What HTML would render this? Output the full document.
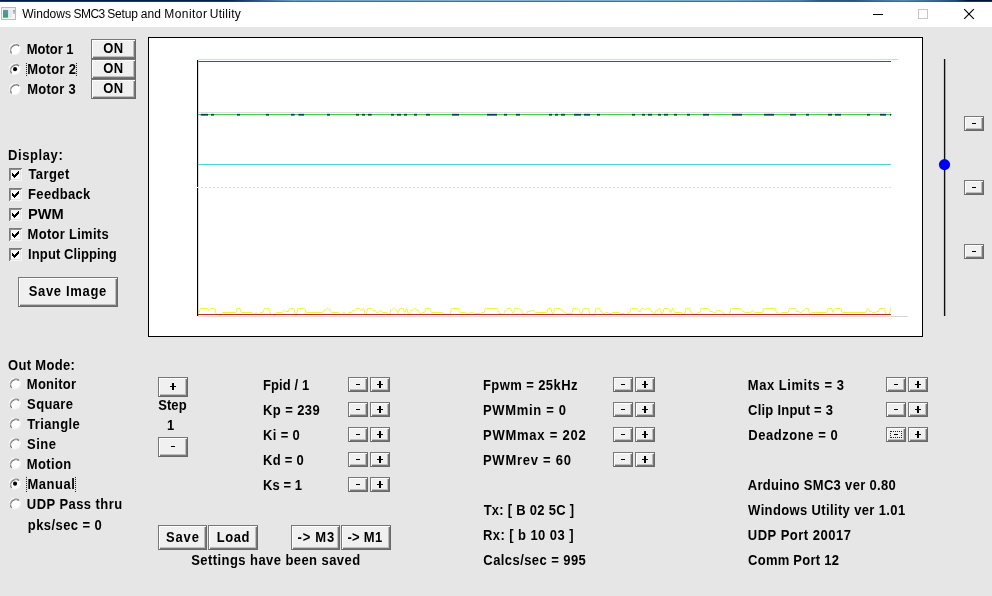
<!DOCTYPE html>
<html><head><meta charset="utf-8"><title>Windows SMC3 Setup and Monitor Utility</title>
<style>
html,body{margin:0;padding:0}
body{width:992px;height:596px;background:#e6e6e6;position:relative;overflow:hidden;font-family:"Liberation Sans",sans-serif;color:#000}
.t{position:absolute;white-space:nowrap;font-weight:bold;font-size:13px;line-height:16px;height:16px;transform:scaleY(1.1);transform-origin:0 12px}
.btn{position:absolute;box-sizing:border-box;border:1px solid;border-color:#787878 #686868 #686868 #787878;background:#f0f0f0;box-shadow:inset 1px 1px 0 #fff,inset -1px -1px 0 #767676,inset -2px -2px 0 #bebebe}
.tw{position:absolute;white-space:nowrap;font-size:12px;line-height:18px;height:18px;color:#000}
.rad{position:absolute;box-sizing:border-box;width:12px;height:12px;border-radius:50%;background:#fff;border:1px solid;border-color:#6a6a6a #f8f8f8 #f8f8f8 #6a6a6a;transform:rotate(0deg)}
.rad.on:after{content:"";position:absolute;left:3px;top:3px;width:4px;height:4px;border-radius:50%;background:#000}
.chk{position:absolute;box-sizing:border-box;width:13px;height:13px;background:#fff;border:1px solid;border-color:#6a6a6a #f4f4f4 #f4f4f4 #6a6a6a;box-shadow:inset 1px 1px 0 #9a9a9a}
.foc{position:absolute;box-sizing:border-box;border:1px dotted #000}
.g{position:absolute;background:#000}
</style></head><body>

<div style="position:absolute;left:0;top:0;width:992px;height:27px;background:#fff"></div>
<div style="position:absolute;left:0;top:0;width:992px;height:1px;background:linear-gradient(90deg,#011b4b 0,#03204f 23%,#3a6090 26.5%,#6d9abd 29.5%,#88b0cc 50%,#7aaac8 73%,#4f7fa8 80.6%,#2f5a80 82.5%,#2a5478 86%,#3f6e98 88%,#5686ae 91%,#3f6a94 94%,#1f4a78 96.3%,#001238 97.6%,#001238 100%)"></div>
<div style="position:absolute;left:0;top:1px;width:992px;height:1px;background:linear-gradient(90deg,#20386a 0,#22396a 23%,#3a5880 26.5%,#48698a 29.5%,#4c6c86 50%,#4a6c88 73%,#456a8c 80.6%,#3a5a7c 83%,#3a5a7c 87%,#466c90 91%,#3c5e86 94%,#2c4a72 96.3%,#203462 97.6%,#203462 100%)"></div>
<svg style="position:absolute;left:1px;top:7px" width="15" height="13" viewBox="0 0 15 13">
<defs><linearGradient id="ig" x1="0" y1="0" x2="0" y2="1"><stop offset="0" stop-color="#6f8fb2"/><stop offset="0.45" stop-color="#4b9a8e"/><stop offset="1" stop-color="#3f9a7c"/></linearGradient>
<linearGradient id="ih" x1="0" y1="0" x2="0" y2="1"><stop offset="0" stop-color="#8fa3bd"/><stop offset="1" stop-color="#c9d0d6"/></linearGradient></defs>
<rect x="0.5" y="0.5" width="14" height="12" fill="#f6f6f6" stroke="#bcbcbc"/>
<rect x="1" y="1" width="13" height="1.6" fill="#eeeeee"/>
<rect x="2" y="2.9" width="5.3" height="7.8" fill="url(#ig)"/>
<rect x="7.3" y="2.9" width="3.6" height="7.8" fill="#ebe8ec"/>
<rect x="11.9" y="2.9" width="2.1" height="4.2" fill="url(#ih)"/>
</svg>
<svg style="position:absolute;left:868px;top:0" width="124" height="27" viewBox="0 0 124 27">
<rect x="5" y="14" width="10" height="1" fill="#000"/>
<rect x="50.5" y="9.5" width="9" height="9" fill="none" stroke="#c6c6c6" stroke-width="1"/>
<path d="M96.2 9.2 L105.8 18.8 M105.8 9.2 L96.2 18.8" stroke="#000" stroke-width="1.15" fill="none"/>
</svg>
<svg style="position:absolute;left:8px;top:43px" width="14" height="14" viewBox="0 0 14 14"><g transform="translate(0.7,0)"><circle cx="6" cy="6" r="5.8" fill="#ffffff"/><path d="M2.18 9.82 A5.4 5.4 0 0 0 9.82 2.18" fill="none" stroke="#f6f6f6" stroke-width="1.1"/><path d="M10.42 2.90 A5.4 5.4 0 0 0 2.90 10.42" fill="none" stroke="#747474" stroke-width="1.25"/><path d="M8.83 2.63 A4.4 4.4 0 0 0 2.63 8.83" fill="none" stroke="#c4c4c4" stroke-width="0.8"/></g></svg>
<svg style="position:absolute;left:8px;top:63px" width="14" height="14" viewBox="0 0 14 14"><g transform="translate(0.7,0)"><circle cx="6" cy="6" r="5.8" fill="#ffffff"/><path d="M2.18 9.82 A5.4 5.4 0 0 0 9.82 2.18" fill="none" stroke="#f6f6f6" stroke-width="1.1"/><path d="M10.42 2.90 A5.4 5.4 0 0 0 2.90 10.42" fill="none" stroke="#747474" stroke-width="1.25"/><path d="M8.83 2.63 A4.4 4.4 0 0 0 2.63 8.83" fill="none" stroke="#c4c4c4" stroke-width="0.8"/><circle cx="6.35" cy="6.15" r="2.05" fill="#000"/></g></svg>
<svg style="position:absolute;left:8px;top:83px" width="14" height="14" viewBox="0 0 14 14"><g transform="translate(0.7,0)"><circle cx="6" cy="6" r="5.8" fill="#ffffff"/><path d="M2.18 9.82 A5.4 5.4 0 0 0 9.82 2.18" fill="none" stroke="#f6f6f6" stroke-width="1.1"/><path d="M10.42 2.90 A5.4 5.4 0 0 0 2.90 10.42" fill="none" stroke="#747474" stroke-width="1.25"/><path d="M8.83 2.63 A4.4 4.4 0 0 0 2.63 8.83" fill="none" stroke="#c4c4c4" stroke-width="0.8"/></g></svg>
<svg style="position:absolute;left:8px;top:377px" width="14" height="14" viewBox="0 0 14 14"><g transform="translate(0.7,0.5)"><circle cx="6" cy="6" r="5.8" fill="#ffffff"/><path d="M2.18 9.82 A5.4 5.4 0 0 0 9.82 2.18" fill="none" stroke="#f6f6f6" stroke-width="1.1"/><path d="M10.42 2.90 A5.4 5.4 0 0 0 2.90 10.42" fill="none" stroke="#747474" stroke-width="1.25"/><path d="M8.83 2.63 A4.4 4.4 0 0 0 2.63 8.83" fill="none" stroke="#c4c4c4" stroke-width="0.8"/></g></svg>
<svg style="position:absolute;left:8px;top:397px" width="14" height="14" viewBox="0 0 14 14"><g transform="translate(0.7,0.5)"><circle cx="6" cy="6" r="5.8" fill="#ffffff"/><path d="M2.18 9.82 A5.4 5.4 0 0 0 9.82 2.18" fill="none" stroke="#f6f6f6" stroke-width="1.1"/><path d="M10.42 2.90 A5.4 5.4 0 0 0 2.90 10.42" fill="none" stroke="#747474" stroke-width="1.25"/><path d="M8.83 2.63 A4.4 4.4 0 0 0 2.63 8.83" fill="none" stroke="#c4c4c4" stroke-width="0.8"/></g></svg>
<svg style="position:absolute;left:8px;top:417px" width="14" height="14" viewBox="0 0 14 14"><g transform="translate(0.7,0.5)"><circle cx="6" cy="6" r="5.8" fill="#ffffff"/><path d="M2.18 9.82 A5.4 5.4 0 0 0 9.82 2.18" fill="none" stroke="#f6f6f6" stroke-width="1.1"/><path d="M10.42 2.90 A5.4 5.4 0 0 0 2.90 10.42" fill="none" stroke="#747474" stroke-width="1.25"/><path d="M8.83 2.63 A4.4 4.4 0 0 0 2.63 8.83" fill="none" stroke="#c4c4c4" stroke-width="0.8"/></g></svg>
<svg style="position:absolute;left:8px;top:437px" width="14" height="14" viewBox="0 0 14 14"><g transform="translate(0.7,0.5)"><circle cx="6" cy="6" r="5.8" fill="#ffffff"/><path d="M2.18 9.82 A5.4 5.4 0 0 0 9.82 2.18" fill="none" stroke="#f6f6f6" stroke-width="1.1"/><path d="M10.42 2.90 A5.4 5.4 0 0 0 2.90 10.42" fill="none" stroke="#747474" stroke-width="1.25"/><path d="M8.83 2.63 A4.4 4.4 0 0 0 2.63 8.83" fill="none" stroke="#c4c4c4" stroke-width="0.8"/></g></svg>
<svg style="position:absolute;left:8px;top:457px" width="14" height="14" viewBox="0 0 14 14"><g transform="translate(0.7,0.5)"><circle cx="6" cy="6" r="5.8" fill="#ffffff"/><path d="M2.18 9.82 A5.4 5.4 0 0 0 9.82 2.18" fill="none" stroke="#f6f6f6" stroke-width="1.1"/><path d="M10.42 2.90 A5.4 5.4 0 0 0 2.90 10.42" fill="none" stroke="#747474" stroke-width="1.25"/><path d="M8.83 2.63 A4.4 4.4 0 0 0 2.63 8.83" fill="none" stroke="#c4c4c4" stroke-width="0.8"/></g></svg>
<svg style="position:absolute;left:8px;top:477px" width="14" height="14" viewBox="0 0 14 14"><g transform="translate(0.7,0.5)"><circle cx="6" cy="6" r="5.8" fill="#ffffff"/><path d="M2.18 9.82 A5.4 5.4 0 0 0 9.82 2.18" fill="none" stroke="#f6f6f6" stroke-width="1.1"/><path d="M10.42 2.90 A5.4 5.4 0 0 0 2.90 10.42" fill="none" stroke="#747474" stroke-width="1.25"/><path d="M8.83 2.63 A4.4 4.4 0 0 0 2.63 8.83" fill="none" stroke="#c4c4c4" stroke-width="0.8"/><circle cx="6.35" cy="6.15" r="2.05" fill="#000"/></g></svg>
<svg style="position:absolute;left:8px;top:497px" width="14" height="14" viewBox="0 0 14 14"><g transform="translate(0.7,0.5)"><circle cx="6" cy="6" r="5.8" fill="#ffffff"/><path d="M2.18 9.82 A5.4 5.4 0 0 0 9.82 2.18" fill="none" stroke="#f6f6f6" stroke-width="1.1"/><path d="M10.42 2.90 A5.4 5.4 0 0 0 2.90 10.42" fill="none" stroke="#747474" stroke-width="1.25"/><path d="M8.83 2.63 A4.4 4.4 0 0 0 2.63 8.83" fill="none" stroke="#c4c4c4" stroke-width="0.8"/></g></svg>
<svg style="position:absolute;left:9px;top:168px" width="13" height="13" viewBox="0 0 13 13" shape-rendering="crispEdges"><rect width="13" height="13" fill="#fbfbfb"/><rect width="13" height="1" fill="#7c7c7c"/><rect width="1" height="13" fill="#7c7c7c"/><rect x="1" y="1" width="11" height="1" fill="#8e8e8e"/><rect x="1" y="1" width="1" height="11" fill="#8e8e8e"/><rect x="1" y="12" width="12" height="1" fill="#f6f6f6"/><rect x="12" y="1" width="1" height="12" fill="#f6f6f6"/><rect x="2" y="11" width="10" height="1" fill="#e4e4e4"/><rect x="11" y="2" width="1" height="10" fill="#e4e4e4"/><rect x="3" y="5" width="1" height="3" fill="#000"/><rect x="4" y="6" width="1" height="3" fill="#000"/><rect x="5" y="7" width="1" height="3" fill="#000"/><rect x="6" y="6" width="1" height="3" fill="#000"/><rect x="7" y="5" width="1" height="3" fill="#000"/><rect x="8" y="4" width="1" height="3" fill="#000"/><rect x="9" y="3" width="1" height="3" fill="#000"/></svg>
<svg style="position:absolute;left:9px;top:188px" width="13" height="13" viewBox="0 0 13 13" shape-rendering="crispEdges"><rect width="13" height="13" fill="#fbfbfb"/><rect width="13" height="1" fill="#7c7c7c"/><rect width="1" height="13" fill="#7c7c7c"/><rect x="1" y="1" width="11" height="1" fill="#8e8e8e"/><rect x="1" y="1" width="1" height="11" fill="#8e8e8e"/><rect x="1" y="12" width="12" height="1" fill="#f6f6f6"/><rect x="12" y="1" width="1" height="12" fill="#f6f6f6"/><rect x="2" y="11" width="10" height="1" fill="#e4e4e4"/><rect x="11" y="2" width="1" height="10" fill="#e4e4e4"/><rect x="3" y="5" width="1" height="3" fill="#000"/><rect x="4" y="6" width="1" height="3" fill="#000"/><rect x="5" y="7" width="1" height="3" fill="#000"/><rect x="6" y="6" width="1" height="3" fill="#000"/><rect x="7" y="5" width="1" height="3" fill="#000"/><rect x="8" y="4" width="1" height="3" fill="#000"/><rect x="9" y="3" width="1" height="3" fill="#000"/></svg>
<svg style="position:absolute;left:9px;top:208px" width="13" height="13" viewBox="0 0 13 13" shape-rendering="crispEdges"><rect width="13" height="13" fill="#fbfbfb"/><rect width="13" height="1" fill="#7c7c7c"/><rect width="1" height="13" fill="#7c7c7c"/><rect x="1" y="1" width="11" height="1" fill="#8e8e8e"/><rect x="1" y="1" width="1" height="11" fill="#8e8e8e"/><rect x="1" y="12" width="12" height="1" fill="#f6f6f6"/><rect x="12" y="1" width="1" height="12" fill="#f6f6f6"/><rect x="2" y="11" width="10" height="1" fill="#e4e4e4"/><rect x="11" y="2" width="1" height="10" fill="#e4e4e4"/><rect x="3" y="5" width="1" height="3" fill="#000"/><rect x="4" y="6" width="1" height="3" fill="#000"/><rect x="5" y="7" width="1" height="3" fill="#000"/><rect x="6" y="6" width="1" height="3" fill="#000"/><rect x="7" y="5" width="1" height="3" fill="#000"/><rect x="8" y="4" width="1" height="3" fill="#000"/><rect x="9" y="3" width="1" height="3" fill="#000"/></svg>
<svg style="position:absolute;left:9px;top:228px" width="13" height="13" viewBox="0 0 13 13" shape-rendering="crispEdges"><rect width="13" height="13" fill="#fbfbfb"/><rect width="13" height="1" fill="#7c7c7c"/><rect width="1" height="13" fill="#7c7c7c"/><rect x="1" y="1" width="11" height="1" fill="#8e8e8e"/><rect x="1" y="1" width="1" height="11" fill="#8e8e8e"/><rect x="1" y="12" width="12" height="1" fill="#f6f6f6"/><rect x="12" y="1" width="1" height="12" fill="#f6f6f6"/><rect x="2" y="11" width="10" height="1" fill="#e4e4e4"/><rect x="11" y="2" width="1" height="10" fill="#e4e4e4"/><rect x="3" y="5" width="1" height="3" fill="#000"/><rect x="4" y="6" width="1" height="3" fill="#000"/><rect x="5" y="7" width="1" height="3" fill="#000"/><rect x="6" y="6" width="1" height="3" fill="#000"/><rect x="7" y="5" width="1" height="3" fill="#000"/><rect x="8" y="4" width="1" height="3" fill="#000"/><rect x="9" y="3" width="1" height="3" fill="#000"/></svg>
<svg style="position:absolute;left:9px;top:248px" width="13" height="13" viewBox="0 0 13 13" shape-rendering="crispEdges"><rect width="13" height="13" fill="#fbfbfb"/><rect width="13" height="1" fill="#7c7c7c"/><rect width="1" height="13" fill="#7c7c7c"/><rect x="1" y="1" width="11" height="1" fill="#8e8e8e"/><rect x="1" y="1" width="1" height="11" fill="#8e8e8e"/><rect x="1" y="12" width="12" height="1" fill="#f6f6f6"/><rect x="12" y="1" width="1" height="12" fill="#f6f6f6"/><rect x="2" y="11" width="10" height="1" fill="#e4e4e4"/><rect x="11" y="2" width="1" height="10" fill="#e4e4e4"/><rect x="3" y="5" width="1" height="3" fill="#000"/><rect x="4" y="6" width="1" height="3" fill="#000"/><rect x="5" y="7" width="1" height="3" fill="#000"/><rect x="6" y="6" width="1" height="3" fill="#000"/><rect x="7" y="5" width="1" height="3" fill="#000"/><rect x="8" y="4" width="1" height="3" fill="#000"/><rect x="9" y="3" width="1" height="3" fill="#000"/></svg>
<div style="position:absolute;left:26px;top:63px;width:1px;height:14px;background:repeating-linear-gradient(180deg,#222 0,#222 1px,transparent 1px,transparent 2px)"></div>
<div style="position:absolute;left:76px;top:63px;width:1px;height:14px;background:repeating-linear-gradient(180deg,#222 0,#222 1px,transparent 1px,transparent 2px)"></div>
<div style="position:absolute;left:26px;top:477px;width:1px;height:15px;background:repeating-linear-gradient(180deg,#222 0,#222 1px,transparent 1px,transparent 2px)"></div>
<div style="position:absolute;left:75px;top:477px;width:1px;height:15px;background:repeating-linear-gradient(180deg,#222 0,#222 1px,transparent 1px,transparent 2px)"></div>
<div class="btn" style="left:91px;top:39px;width:45px;height:20px"></div>
<div class="btn" style="left:91px;top:59px;width:45px;height:20px"></div>
<div class="btn" style="left:91px;top:79px;width:45px;height:20px"></div>
<div class="btn" style="left:18px;top:277px;width:100px;height:30px"></div>
<div class="btn" style="left:158px;top:377px;width:30px;height:20px"></div>
<div class="btn" style="left:158px;top:437px;width:30px;height:20px"></div>
<div class="btn" style="left:158px;top:525px;width:49px;height:25px"></div>
<div class="btn" style="left:208px;top:525px;width:50px;height:25px"></div>
<div class="btn" style="left:291px;top:525px;width:49px;height:25px"></div>
<div class="btn" style="left:341px;top:525px;width:50px;height:25px"></div>
<div class="btn" style="left:348px;top:377px;width:20px;height:15px"></div>
<div class="btn" style="left:370px;top:377px;width:20px;height:15px"></div>
<div class="g" style="left:356px;top:383.8px;width:4px;height:1.5px"></div>
<div class="g" style="left:377px;top:383.8px;width:6px;height:1.5px"></div><div class="g" style="left:379px;top:381px;width:2px;height:7px"></div>
<div class="btn" style="left:348px;top:402px;width:20px;height:15px"></div>
<div class="btn" style="left:370px;top:402px;width:20px;height:15px"></div>
<div class="g" style="left:356px;top:408.8px;width:4px;height:1.5px"></div>
<div class="g" style="left:377px;top:408.8px;width:6px;height:1.5px"></div><div class="g" style="left:379px;top:406px;width:2px;height:7px"></div>
<div class="btn" style="left:348px;top:427px;width:20px;height:15px"></div>
<div class="btn" style="left:370px;top:427px;width:20px;height:15px"></div>
<div class="g" style="left:356px;top:433.8px;width:4px;height:1.5px"></div>
<div class="g" style="left:377px;top:433.8px;width:6px;height:1.5px"></div><div class="g" style="left:379px;top:431px;width:2px;height:7px"></div>
<div class="btn" style="left:348px;top:452px;width:20px;height:15px"></div>
<div class="btn" style="left:370px;top:452px;width:20px;height:15px"></div>
<div class="g" style="left:356px;top:458.8px;width:4px;height:1.5px"></div>
<div class="g" style="left:377px;top:458.8px;width:6px;height:1.5px"></div><div class="g" style="left:379px;top:456px;width:2px;height:7px"></div>
<div class="btn" style="left:348px;top:477px;width:20px;height:15px"></div>
<div class="btn" style="left:370px;top:477px;width:20px;height:15px"></div>
<div class="g" style="left:356px;top:483.8px;width:4px;height:1.5px"></div>
<div class="g" style="left:377px;top:483.8px;width:6px;height:1.5px"></div><div class="g" style="left:379px;top:481px;width:2px;height:7px"></div>
<div class="btn" style="left:613px;top:377px;width:20px;height:15px"></div>
<div class="btn" style="left:635px;top:377px;width:20px;height:15px"></div>
<div class="g" style="left:621px;top:383.8px;width:4px;height:1.5px"></div>
<div class="g" style="left:642px;top:383.8px;width:6px;height:1.5px"></div><div class="g" style="left:644px;top:381px;width:2px;height:7px"></div>
<div class="btn" style="left:613px;top:402px;width:20px;height:15px"></div>
<div class="btn" style="left:635px;top:402px;width:20px;height:15px"></div>
<div class="g" style="left:621px;top:408.8px;width:4px;height:1.5px"></div>
<div class="g" style="left:642px;top:408.8px;width:6px;height:1.5px"></div><div class="g" style="left:644px;top:406px;width:2px;height:7px"></div>
<div class="btn" style="left:613px;top:427px;width:20px;height:15px"></div>
<div class="btn" style="left:635px;top:427px;width:20px;height:15px"></div>
<div class="g" style="left:621px;top:433.8px;width:4px;height:1.5px"></div>
<div class="g" style="left:642px;top:433.8px;width:6px;height:1.5px"></div><div class="g" style="left:644px;top:431px;width:2px;height:7px"></div>
<div class="btn" style="left:613px;top:452px;width:20px;height:15px"></div>
<div class="btn" style="left:635px;top:452px;width:20px;height:15px"></div>
<div class="g" style="left:621px;top:458.8px;width:4px;height:1.5px"></div>
<div class="g" style="left:642px;top:458.8px;width:6px;height:1.5px"></div><div class="g" style="left:644px;top:456px;width:2px;height:7px"></div>
<div class="btn" style="left:886px;top:377px;width:20px;height:15px"></div>
<div class="btn" style="left:908px;top:377px;width:20px;height:15px"></div>
<div class="g" style="left:894px;top:383.8px;width:4px;height:1.5px"></div>
<div class="g" style="left:915px;top:383.8px;width:6px;height:1.5px"></div><div class="g" style="left:917px;top:381px;width:2px;height:7px"></div>
<div class="btn" style="left:886px;top:402px;width:20px;height:15px"></div>
<div class="btn" style="left:908px;top:402px;width:20px;height:15px"></div>
<div class="g" style="left:894px;top:408.8px;width:4px;height:1.5px"></div>
<div class="g" style="left:915px;top:408.8px;width:6px;height:1.5px"></div><div class="g" style="left:917px;top:406px;width:2px;height:7px"></div>
<div class="btn" style="left:886px;top:427px;width:20px;height:15px"></div>
<div class="btn" style="left:908px;top:427px;width:20px;height:15px"></div>
<div class="g" style="left:894px;top:433.8px;width:4px;height:1.5px"></div>
<div class="g" style="left:915px;top:433.8px;width:6px;height:1.5px"></div><div class="g" style="left:917px;top:431px;width:2px;height:7px"></div>
<div class="foc" style="left:890px;top:431px;width:12px;height:7px;border-color:#222"></div>
<div class="btn" style="left:964px;top:116px;width:20px;height:15px"></div>
<div class="g" style="left:972px;top:122.8px;width:4px;height:1.5px"></div>
<div class="btn" style="left:964px;top:180px;width:20px;height:15px"></div>
<div class="g" style="left:972px;top:186.8px;width:4px;height:1.5px"></div>
<div class="btn" style="left:964px;top:244px;width:20px;height:15px"></div>
<div class="g" style="left:972px;top:250.8px;width:4px;height:1.5px"></div>
<div class="g" style="left:170px;top:385.8px;width:6px;height:1.3px"></div><div class="g" style="left:172.1px;top:383px;width:2px;height:7px"></div>
<div class="g" style="left:171.1px;top:445.5px;width:4.2px;height:1.3px"></div>
<div style="position:absolute;left:148px;top:37px;width:775px;height:300px;box-sizing:border-box;border:1px solid #000;background:#fff"></div>
<svg style="position:absolute;left:0;top:0" width="992" height="596" viewBox="0 0 992 596">
<rect x="197" y="60" width="1.15" height="256" fill="#000"/>
<rect x="198" y="59" width="693" height="1" fill="#ead2d2"/>
<rect x="891" y="59" width="7" height="1" fill="#d4d4d4"/>
<rect x="198.5" y="61" width="692.5" height="1" fill="#aa2a30"/>
<rect x="198" y="112" width="693" height="1" fill="#dedede"/>
<rect x="198" y="114" width="693" height="1.15" fill="#44cc4c"/>
<rect x="200.8" y="113.85" width="7.2" height="1.75" fill="#08405a"/>
<rect x="211" y="113.85" width="3" height="1.75" fill="#08405a"/>
<rect x="237" y="113.85" width="3" height="1.75" fill="#08405a"/>
<rect x="266" y="113.85" width="3" height="1.75" fill="#08405a"/>
<rect x="291" y="113.85" width="3.6" height="1.75" fill="#08405a"/>
<rect x="298.4" y="113.85" width="5.6" height="1.75" fill="#08405a"/>
<rect x="327" y="113.85" width="3" height="1.75" fill="#08405a"/>
<rect x="356" y="113.85" width="3" height="1.75" fill="#08405a"/>
<rect x="362" y="113.85" width="3" height="1.75" fill="#08405a"/>
<rect x="368" y="113.85" width="3.7" height="1.75" fill="#08405a"/>
<rect x="391" y="113.85" width="3" height="1.75" fill="#08405a"/>
<rect x="397" y="113.85" width="4" height="1.75" fill="#08405a"/>
<rect x="404" y="113.85" width="3" height="1.75" fill="#08405a"/>
<rect x="414" y="113.85" width="3" height="1.75" fill="#08405a"/>
<rect x="426" y="113.85" width="4" height="1.75" fill="#08405a"/>
<rect x="452" y="113.85" width="7" height="1.75" fill="#08405a"/>
<rect x="487" y="113.85" width="10" height="1.75" fill="#08405a"/>
<rect x="504" y="113.85" width="3" height="1.75" fill="#08405a"/>
<rect x="516" y="113.85" width="4" height="1.75" fill="#08405a"/>
<rect x="549" y="113.85" width="3" height="1.75" fill="#08405a"/>
<rect x="555" y="113.85" width="3" height="1.75" fill="#08405a"/>
<rect x="561" y="113.85" width="4" height="1.75" fill="#08405a"/>
<rect x="574" y="113.85" width="7" height="1.75" fill="#08405a"/>
<rect x="584" y="113.85" width="6" height="1.75" fill="#08405a"/>
<rect x="597" y="113.85" width="3" height="1.75" fill="#08405a"/>
<rect x="632" y="113.85" width="3" height="1.75" fill="#08405a"/>
<rect x="642" y="113.85" width="3" height="1.75" fill="#08405a"/>
<rect x="648" y="113.85" width="4" height="1.75" fill="#08405a"/>
<rect x="658" y="113.85" width="3" height="1.75" fill="#08405a"/>
<rect x="664" y="113.85" width="4" height="1.75" fill="#08405a"/>
<rect x="674" y="113.85" width="3" height="1.75" fill="#08405a"/>
<rect x="687" y="113.85" width="3" height="1.75" fill="#08405a"/>
<rect x="703" y="113.85" width="6" height="1.75" fill="#08405a"/>
<rect x="732" y="113.85" width="10" height="1.75" fill="#08405a"/>
<rect x="764" y="113.85" width="10" height="1.75" fill="#08405a"/>
<rect x="790" y="113.85" width="6" height="1.75" fill="#08405a"/>
<rect x="806" y="113.85" width="3" height="1.75" fill="#08405a"/>
<rect x="828" y="113.85" width="4" height="1.75" fill="#08405a"/>
<rect x="835" y="113.85" width="6" height="1.75" fill="#08405a"/>
<rect x="867" y="113.85" width="3" height="1.75" fill="#08405a"/>
<rect x="880" y="113.85" width="6" height="1.75" fill="#08405a"/>
<rect x="890" y="113.85" width="1.3" height="1.75" fill="#08405a"/>
<rect x="198" y="164" width="693" height="1.1" fill="#52d2d2"/>
<line x1="197" y1="187.5" x2="891" y2="187.5" stroke="#d8d8d8" stroke-width="1" stroke-dasharray="2 2"/>
<rect x="197" y="187" width="1" height="1" fill="#fff"/>
<rect x="198" y="316" width="693" height="1" fill="#f4d8d4"/>
<rect x="891" y="316" width="17" height="1" fill="#d4d4d4"/>
<polyline fill="none" stroke="#f5ee30" stroke-opacity="0.92" stroke-width="1" stroke-linejoin="round" points="198.3,312.5 199.1,312.5 200.5,308.5 201.3,308.5 207.6,308.5 208.9,310.5 209.5,310.5 210.9,308.5 211.4,308.5 213.4,308.5 214.9,308.5 216.3,314.5 217.7,314.5 218.3,314.5 219.7,315.5 220.2,315.5 220.8,315.5 222.2,312.5 222.8,312.5 235.4,312.5 235.9,312.5 237.3,308.5 237.9,308.5 239.6,308.5 240.0,308.5 241.4,312.5 241.7,312.5 251.7,312.5 252.3,312.5 253.7,314.5 254.3,314.5 254.4,314.5 255.8,312.5 256.0,312.5 256.3,312.5 257.7,314.5 258.0,314.5 259.2,314.5 260.6,312.5 261.8,312.5 263.0,312.5 264.4,308.5 265.6,308.5 268.1,308.5 269.3,308.5 270.7,314.5 271.9,314.5 272.5,314.5 273.9,315.5 274.4,315.5 275.0,315.5 276.4,312.5 276.9,312.5 282.0,312.5 282.2,312.5 283.6,310.5 283.8,310.5 284.7,310.5 286.1,311.5 287.0,311.5 288.2,311.5 289.6,308.5 290.8,308.5 293.3,308.5 293.9,308.5 295.3,315.5 295.8,315.5 296.4,315.5 297.8,308.5 298.4,308.5 303.4,308.5 304.6,308.5 306.0,312.5 307.2,312.5 321.0,312.5 322.2,312.5 323.6,310.5 324.8,310.5 325.4,310.5 326.8,308.5 327.3,308.5 327.5,308.5 328.9,309.5 329.1,309.5 330.1,309.5 331.5,312.5 332.4,312.5 338.7,312.5 339.2,312.5 340.6,314.5 341.2,314.5 342.0,314.5 343.4,312.5 344.2,312.5 344.5,312.5 345.9,314.5 346.2,314.5 347.4,314.5 348.8,312.5 350.0,312.5 351.2,312.5 352.6,310.5 353.8,310.5 354.6,310.5 356.0,308.5 356.8,308.5 359.4,308.5 359.7,308.5 361.1,310.5 361.4,310.5 361.7,310.5 363.1,308.5 363.4,308.5 363.8,308.5 365.2,314.5 365.7,314.5 366.2,314.5 367.6,308.5 368.2,308.5 370.9,308.5 371.8,308.5 373.2,310.5 374.0,310.5 375.2,310.5 376.6,312.5 377.8,312.5 378.3,312.5 379.7,310.5 380.3,310.5 380.8,310.5 382.2,312.5 382.8,312.5 386.6,312.5 387.1,312.5 388.5,314.5 389.1,314.5 389.7,314.5 391.1,309.5 391.6,309.5 392.2,309.5 393.6,308.5 394.1,308.5 394.4,308.5 395.8,309.5 396.1,309.5 396.3,309.5 397.7,312.5 397.9,312.5 398.5,312.5 399.9,308.5 400.4,308.5 403.0,308.5 403.1,308.5 404.5,312.5 404.7,312.5 405.0,312.5 406.4,308.5 406.7,308.5 407.0,308.5 408.4,314.5 408.8,314.5 409.6,314.5 411.0,310.5 411.8,310.5 412.7,310.5 414.1,308.5 415.1,308.5 415.9,308.5 417.3,310.5 418.1,310.5 418.6,310.5 420.0,313.5 420.6,313.5 421.2,313.5 422.6,312.5 423.1,312.5 424.3,312.5 425.7,308.5 426.9,308.5 429.4,308.5 430.0,308.5 431.4,312.5 431.9,312.5 432.5,312.5 441.3,312.5 442.5,312.5 443.9,314.5 445.1,314.5 448.9,314.5 450.1,314.5 451.5,308.5 452.7,308.5 457.7,308.5 458.9,308.5 460.3,312.5 461.5,312.5 465.3,312.5 465.8,312.5 467.2,313.5 467.8,313.5 469.0,313.5 470.4,312.5 471.6,312.5 472.8,312.5 474.2,313.5 475.4,313.5 479.1,313.5 480.3,313.5 481.7,312.5 482.9,312.5 484.1,312.5 485.5,308.5 486.7,308.5 496.0,308.5 497.6,308.5 499.0,313.5 500.6,313.5 501.1,313.5 502.5,314.5 503.1,314.5 503.6,314.5 505.0,310.5 505.6,310.5 506.2,310.5 507.6,308.5 508.1,308.5 510.1,308.5 511.0,308.5 512.4,312.5 513.2,312.5 513.7,312.5 515.1,308.5 515.7,308.5 518.2,308.5 518.5,308.5 519.9,309.5 520.2,309.5 521.0,309.5 522.4,313.5 523.2,313.5 523.8,313.5 525.2,314.5 525.8,314.5 526.3,314.5 527.7,311.5 528.3,311.5 530.1,311.5 531.5,310.5 533.3,310.5 533.9,310.5 535.3,312.5 535.8,312.5 545.9,312.5 546.7,312.5 548.1,308.5 549.0,308.5 551.0,308.5 551.1,308.5 552.5,314.5 552.7,314.5 553.3,314.5 554.7,308.5 555.3,308.5 557.3,308.5 559.8,308.5 560.3,308.5 561.7,310.5 562.3,310.5 562.9,310.5 564.3,312.5 564.8,312.5 565.4,312.5 566.8,313.5 567.3,313.5 571.1,313.5 571.9,313.5 573.3,308.5 574.2,308.5 577.4,308.5 577.6,308.5 579.0,310.5 579.2,310.5 579.5,310.5 580.9,313.5 581.2,313.5 582.0,313.5 583.4,308.5 584.2,308.5 588.3,308.5 588.4,308.5 589.8,314.5 590.0,314.5 591.2,314.5 592.6,315.5 593.8,315.5 594.6,315.5 596.0,308.5 596.8,308.5 598.9,308.5 599.4,308.5 600.8,311.5 601.4,311.5 601.9,311.5 603.3,313.5 603.9,313.5 604.5,313.5 605.9,312.5 606.4,312.5 607.6,312.5 609.0,313.5 610.2,313.5 611.4,313.5 612.8,312.5 614.0,312.5 617.8,312.5 619.6,312.5 621.0,313.5 622.8,313.5 624.0,313.5 625.4,314.5 626.6,314.5 627.1,314.5 628.5,312.5 629.1,312.5 629.7,312.5 631.1,308.5 631.6,308.5 634.1,308.5 636.7,308.5 637.2,308.5 638.6,311.5 639.2,311.5 640.4,311.5 641.8,308.5 643.0,308.5 643.5,308.5 644.9,309.5 645.5,309.5 645.7,309.5 647.1,308.5 647.2,308.5 649.8,308.5 650.1,308.5 651.5,311.5 651.8,311.5 652.3,311.5 653.7,313.5 654.3,313.5 654.9,313.5 656.3,310.5 656.8,310.5 657.6,310.5 659.0,308.5 659.8,308.5 660.1,308.5 661.5,313.5 661.9,313.5 662.7,313.5 664.1,308.5 664.9,308.5 668.2,308.5 668.7,308.5 670.1,312.5 670.7,312.5 670.9,312.5 672.3,308.5 672.5,308.5 673.1,308.5 674.5,312.5 675.0,312.5 681.3,312.5 681.9,312.5 683.3,314.5 683.9,314.5 684.4,314.5 685.8,308.5 686.4,308.5 689.7,308.5 689.8,308.5 691.2,312.5 691.4,312.5 692.0,312.5 693.4,314.5 693.9,314.5 694.5,314.5 695.9,313.5 696.5,313.5 697.0,313.5 698.4,312.5 699.0,312.5 699.9,312.5 701.3,308.5 702.3,308.5 704.0,308.5 708.3,308.5 708.6,308.5 710.0,311.5 710.3,311.5 712.1,311.5 713.5,312.5 715.4,312.5 715.9,312.5 717.3,310.5 717.9,310.5 720.4,310.5 721.0,310.5 722.4,312.5 722.9,312.5 723.5,312.5 724.9,314.5 725.4,314.5 728.5,314.5 729.4,314.5 730.8,308.5 731.7,308.5 740.6,308.5 741.1,308.5 742.5,311.5 743.1,311.5 743.6,311.5 745.0,312.5 745.6,312.5 750.6,312.5 751.0,312.5 752.4,310.5 752.7,310.5 752.8,310.5 754.2,312.5 754.4,312.5 762.0,312.5 762.5,312.5 763.9,308.5 764.5,308.5 774.6,308.5 775.1,308.5 776.5,312.5 777.1,312.5 777.7,312.5 779.1,314.5 779.6,314.5 780.2,314.5 781.6,312.5 782.1,312.5 787.2,312.5 788.1,312.5 789.5,308.5 790.5,308.5 794.7,308.5 795.3,308.5 796.7,311.5 797.3,311.5 798.5,311.5 799.9,312.5 801.0,312.5 801.6,312.5 803.0,310.5 803.6,310.5 804.1,310.5 805.5,308.5 806.1,308.5 808.1,308.5 808.3,308.5 809.7,314.5 809.9,314.5 810.4,314.5 811.8,312.5 812.4,312.5 826.2,312.5 826.8,312.5 828.2,308.5 828.8,308.5 831.3,308.5 831.6,308.5 833.0,312.5 833.3,312.5 833.5,312.5 834.9,308.5 835.1,308.5 840.1,308.5 840.7,308.5 842.1,312.5 842.6,312.5 865.3,312.5 865.9,312.5 867.3,308.5 867.8,308.5 868.4,308.5 869.8,311.5 870.4,311.5 871.5,311.5 872.9,312.5 874.1,312.5 875.3,312.5 876.7,311.5 877.9,311.5 878.5,311.5 879.9,308.5 880.4,308.5 884.2,308.5 884.5,308.5 885.9,314.5 886.2,314.5 889.3,314.5 890.8,307.5"/>
<rect x="198" y="314" width="693" height="1.1" fill="#a62622" fill-opacity="0.93"/>
<rect x="943.9" y="59" width="1.4" height="257" fill="#111"/>
<circle cx="944.5" cy="164.6" r="5.6" fill="#0000f0"/>
</svg>
<div id="txt" style="position:absolute;left:0;top:0;width:992px;height:596px;filter:grayscale(1)">
<div class="t" id="t0" style="left:26.82px;top:42px;letter-spacing:-0.03px">Motor 1</div>
<div class="t" id="t1" style="left:27.16px;top:62px;letter-spacing:0.302px">Motor 2</div>
<div class="t" id="t2" style="left:27.16px;top:82px;letter-spacing:0.285px">Motor 3</div>
<div class="t" id="t3" style="left:8.08px;top:148px;letter-spacing:0.586px">Display:</div>
<div class="t" id="t4" style="left:28.41px;top:167px;letter-spacing:0.42px">Target</div>
<div class="t" id="t5" style="left:28.09px;top:187px;letter-spacing:0.318px">Feedback</div>
<div class="t" id="t6" style="left:27.56px;top:207px;transform:scale(1.1269,1.1)">PWM</div>
<div class="t" id="t7" style="left:27.56px;top:227px;letter-spacing:0.282px">Motor Limits</div>
<div class="t" id="t8" style="left:28.08px;top:247px;letter-spacing:0.104px">Input Clipping</div>
<div class="t" id="t9" style="left:28.69px;top:284px;letter-spacing:0.668px">Save Image</div>
<div class="t" id="t10" style="left:8.01px;top:358px;letter-spacing:0.315px">Out Mode:</div>
<div class="t" id="t11" style="left:26.86px;top:377px;letter-spacing:0.239px">Monitor</div>
<div class="t" id="t12" style="left:27.1px;top:397px;letter-spacing:0.367px">Square</div>
<div class="t" id="t13" style="left:27.13px;top:417px;letter-spacing:0.388px">Triangle</div>
<div class="t" id="t14" style="left:27.02px;top:437px;letter-spacing:0.48px">Sine</div>
<div class="t" id="t15" style="left:26.87px;top:457px;letter-spacing:0.332px">Motion</div>
<div class="t" id="t16" style="left:27.47px;top:477px;letter-spacing:0.499px">Manual</div>
<div class="t" id="t17" style="left:26.86px;top:497px;letter-spacing:0.429px">UDP Pass thru</div>
<div class="t" id="t18" style="left:27.87px;top:518px;letter-spacing:0.416px">pks/sec = 0</div>
<div class="t" id="t19" style="left:158.22px;top:398px;letter-spacing:0.072px">Step</div>
<div class="t" id="t20" style="left:166.9px;top:418px;letter-spacing:0px">1</div>
<div class="t" id="t21" style="left:166.04px;top:530px;letter-spacing:0.838px">Save</div>
<div class="t" id="t22" style="left:216.87px;top:530px;letter-spacing:0.474px">Load</div>
<div class="t" id="t23" style="left:297.55px;top:530px;letter-spacing:0.75px">-&gt; M3</div>
<div class="t" id="t24" style="left:347.39px;top:530px;letter-spacing:0.286px">-&gt; M1</div>
<div class="t" id="t25" style="left:191.24px;top:553px;letter-spacing:0.432px">Settings have been saved</div>
<div class="t" id="t26" style="left:262.94px;top:378px;letter-spacing:0.118px">Fpid / 1</div>
<div class="t" id="t27" style="left:263px;top:403px;letter-spacing:0.41px">Kp = 239</div>
<div class="t" id="t28" style="left:263px;top:428px;letter-spacing:0.359px">Ki = 0</div>
<div class="t" id="t29" style="left:263px;top:453px;letter-spacing:0.294px">Kd = 0</div>
<div class="t" id="t30" style="left:263px;top:478px;letter-spacing:0.075px">Ks = 1</div>
<div class="t" id="t31" style="left:482.94px;top:378px;letter-spacing:0.415px">Fpwm = 25kHz</div>
<div class="t" id="t32" style="left:482.94px;top:403px;letter-spacing:0.679px">PWMmin = 0</div>
<div class="t" id="t33" style="left:482.94px;top:428px;letter-spacing:0.772px">PWMmax = 202</div>
<div class="t" id="t34" style="left:482.94px;top:453px;letter-spacing:0.753px">PWMrev = 60</div>
<div class="t" id="t35" style="left:483.63px;top:503px;letter-spacing:0.274px">Tx: [ B 02 5C ]</div>
<div class="t" id="t36" style="left:482.94px;top:528px;letter-spacing:0.431px">Rx: [ b 10 03 ]</div>
<div class="t" id="t37" style="left:483.37px;top:553px;letter-spacing:0.423px">Calcs/sec = 995</div>
<div class="t" id="t38" style="left:747.8px;top:378px;letter-spacing:0.529px">Max Limits = 3</div>
<div class="t" id="t39" style="left:748.09px;top:403px;letter-spacing:0.227px">Clip Input = 3</div>
<div class="t" id="t40" style="left:748.22px;top:428px;letter-spacing:0.549px">Deadzone = 0</div>
<div class="t" id="t41" style="left:747.75px;top:478px;letter-spacing:0.321px">Arduino SMC3 ver 0.80</div>
<div class="t" id="t42" style="left:748.11px;top:503px;letter-spacing:0.363px">Windows Utility ver 1.01</div>
<div class="t" id="t43" style="left:747.8px;top:528px;letter-spacing:0.503px">UDP Port 20017</div>
<div class="t" id="t44" style="left:748.08px;top:553px;letter-spacing:0.242px">Comm Port 12</div>
<div class="t" id="t45" style="left:103.18px;top:41px;letter-spacing:0.488px">ON</div>
<div class="t" id="t46" style="left:103.18px;top:61px;letter-spacing:0.488px">ON</div>
<div class="t" id="t47" style="left:103.18px;top:81px;letter-spacing:0.488px">ON</div>
<div class="tw" id="t48" style="left:22.2px;top:5px;letter-spacing:0.014px">Windows</div>
<div class="tw" id="t49" style="left:73.58px;top:5px;letter-spacing:-0.598px">SMC3</div>
<div class="tw" id="t50" style="left:107.23px;top:5px;letter-spacing:-0.168px">Setup</div>
<div class="tw" id="t51" style="left:140.76px;top:5px;letter-spacing:0.12px">and</div>
<div class="tw" id="t52" style="left:164.19px;top:5px;letter-spacing:0.462px">Monitor</div>
<div class="tw" id="t53" style="left:209.81px;top:5px;letter-spacing:0.272px">Utility</div>
</div>
</body></html>
